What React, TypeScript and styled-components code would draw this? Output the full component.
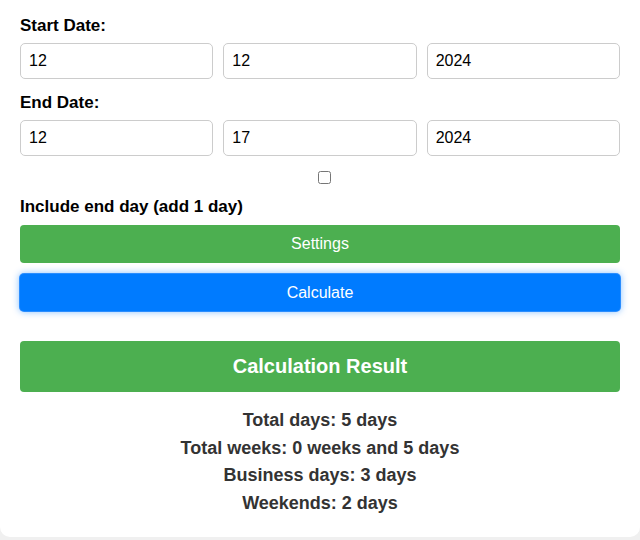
import React, { useState } from 'react';
import styled, { createGlobalStyle } from 'styled-components';

const GlobalStyle = createGlobalStyle`
  html, body {
    margin: 0;
    padding: 0;
    background: #f0f0f0;
    font-family: "Liberation Sans", Arial, sans-serif;
  }
`;

const Card = styled.div`
  background: #fff;
  border-radius: 0 0 10px 10px;
  padding: 16px 20px 20px;
  margin-bottom: 3px;
`;

const Label = styled.label<{ $mb?: number }>`
  display: block;
  font-size: 17px;
  font-weight: bold;
  color: #000;
  line-height: 19px;
  margin-bottom: ${(p) => p.$mb ?? 8}px;
`;

const DateRow = styled.div`
  display: grid;
  grid-template-columns: repeat(3, 1fr);
  gap: 10px;
  margin-bottom: 14px;
`;

const DateInput = styled.input`
  box-sizing: border-box;
  width: 100%;
  height: 36px;
  padding: 8px;
  border: 1px solid #ccc;
  border-radius: 5px;
  font-family: inherit;
  font-size: 16px;
  color: #000;
  outline: none;
`;

const CheckRow = styled.div`
  display: flex;
  justify-content: center;
  padding-left: 8px;
  margin: 15px 0 13px;
`;

const Check = styled.input`
  margin: 0;
  width: 13px;
  height: 13px;
`;

const Button = styled.button<{ $tone: 'green' | 'blue'; $focused?: boolean; $gap: number }>`
  display: block;
  width: 100%;
  height: ${(p) => (p.$focused ? 37 : 38)}px;
  border: none;
  border-radius: 4px;
  background: ${(p) => (p.$tone === 'green' ? '#4caf50' : '#007bff')};
  color: #fff;
  font-family: inherit;
  font-size: 16px;
  cursor: pointer;
  margin-top: ${(p) => p.$gap}px;
  box-shadow: ${(p) =>
    p.$focused ? '0 0 0 1px #2a8dff, 0 0 7px 1px rgba(0, 123, 255, 0.45)' : 'none'};
`;

const ResultHeader = styled.h2`
  margin: 30px 0 0;
  background: #4caf50;
  color: #fff;
  border-radius: 4px;
  font-size: 20px;
  font-weight: bold;
  line-height: 23px;
  padding: 14px 0;
  text-align: center;
`;

const ResultList = styled.div`
  margin-top: 15px;
  text-align: center;
`;

const ResultLine = styled.p`
  margin: 0;
  font-size: 18px;
  font-weight: bold;
  line-height: 27.6px;
  color: #333;
`;

type DateParts = [string, string, string];

function DateFields({ value, onChange }: { value: DateParts; onChange: (v: DateParts) => void }) {
  return (
    <DateRow>
      {value.map((v, i) => (
        <DateInput
          key={i}
          value={v}
          onChange={(e) => {
            const next = [...value] as DateParts;
            next[i] = e.target.value;
            onChange(next);
          }}
        />
      ))}
    </DateRow>
  );
}

export default function App() {
  const [start, setStart] = useState<DateParts>(['12', '12', '2024']);
  const [end, setEnd] = useState<DateParts>(['12', '17', '2024']);
  const [includeEnd, setIncludeEnd] = useState(false);

  const results = [
    'Total days: 5 days',
    'Total weeks: 0 weeks and 5 days',
    'Business days: 3 days',
    'Weekends: 2 days',
  ];

  return (
    <>
      <GlobalStyle />
      <Card>
        <Label>Start Date:</Label>
        <DateFields value={start} onChange={setStart} />
        <Label>End Date:</Label>
        <DateFields value={end} onChange={setEnd} />
        <CheckRow>
          <Check type="checkbox" checked={includeEnd} onChange={(e) => setIncludeEnd(e.target.checked)} />
        </CheckRow>
        <Label $mb={0}>Include end day (add 1 day)</Label>
        <Button $tone="green" $gap={9}>Settings</Button>
        <Button $tone="blue" $gap={11} $focused>Calculate</Button>
        <ResultHeader>Calculation Result</ResultHeader>
        <ResultList>
          {results.map((r) => (
            <ResultLine key={r}>{r}</ResultLine>
          ))}
        </ResultList>
      </Card>
    </>
  );
}
